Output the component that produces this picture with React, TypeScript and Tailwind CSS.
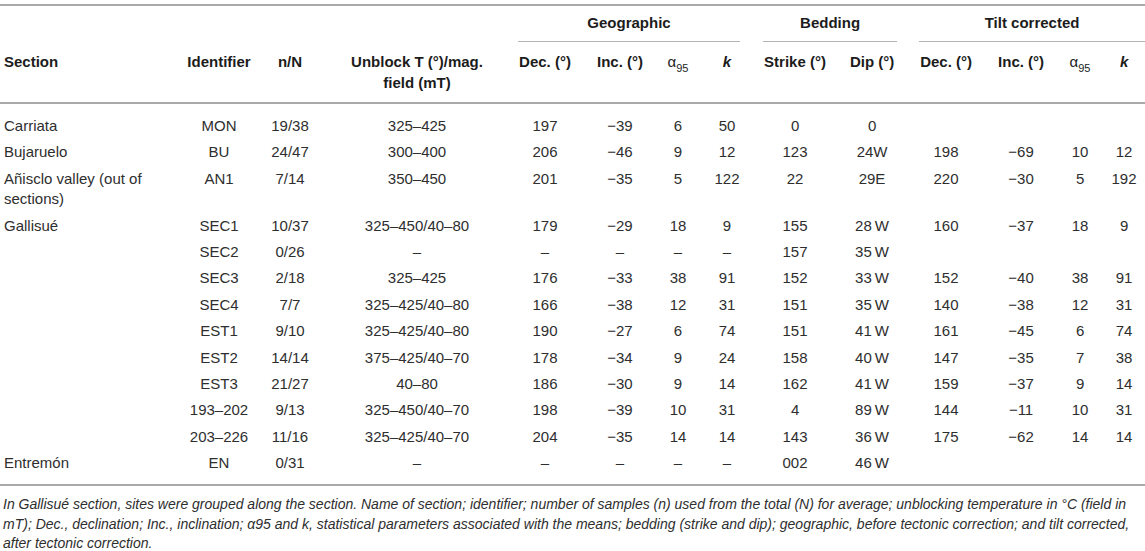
import React from 'react';

type Row = {
  section?: string;
  id: string;
  n: string;
  unblock: string;
  geo: string[];
  bed: string[];
  tilt?: string[];
};

const T = '\u2009';
const M = '\u2212';
const D = '\u2013';

const rows: Row[] = [
  { section: 'Carriata', id: 'MON', n: '19/38', unblock: `325${D}425`, geo: ['197', `${M}39`, '6', '50'], bed: ['0', '0'] },
  { section: 'Bujaruelo', id: 'BU', n: '24/47', unblock: `300${D}400`, geo: ['206', `${M}46`, '9', '12'], bed: ['123', '24W'], tilt: ['198', `${M}69`, '10', '12'] },
  { section: 'Añisclo valley (out of sections)', id: 'AN1', n: '7/14', unblock: `350${D}450`, geo: ['201', `${M}35`, '5', '122'], bed: ['22', '29E'], tilt: ['220', `${M}30`, '5', '192'] },
  { section: 'Gallisué', id: 'SEC1', n: '10/37', unblock: `325${D}450/40${D}80`, geo: ['179', `${M}29`, '18', '9'], bed: ['155', `28${T}W`], tilt: ['160', `${M}37`, '18', '9'] },
  { id: 'SEC2', n: '0/26', unblock: D, geo: [D, D, D, D], bed: ['157', `35${T}W`] },
  { id: 'SEC3', n: '2/18', unblock: `325${D}425`, geo: ['176', `${M}33`, '38', '91'], bed: ['152', `33${T}W`], tilt: ['152', `${M}40`, '38', '91'] },
  { id: 'SEC4', n: '7/7', unblock: `325${D}425/40${D}80`, geo: ['166', `${M}38`, '12', '31'], bed: ['151', `35${T}W`], tilt: ['140', `${M}38`, '12', '31'] },
  { id: 'EST1', n: '9/10', unblock: `325${D}425/40${D}80`, geo: ['190', `${M}27`, '6', '74'], bed: ['151', `41${T}W`], tilt: ['161', `${M}45`, '6', '74'] },
  { id: 'EST2', n: '14/14', unblock: `375${D}425/40${D}70`, geo: ['178', `${M}34`, '9', '24'], bed: ['158', `40${T}W`], tilt: ['147', `${M}35`, '7', '38'] },
  { id: 'EST3', n: '21/27', unblock: `40${D}80`, geo: ['186', `${M}30`, '9', '14'], bed: ['162', `41${T}W`], tilt: ['159', `${M}37`, '9', '14'] },
  { id: `193${D}202`, n: '9/13', unblock: `325${D}450/40${D}70`, geo: ['198', `${M}39`, '10', '31'], bed: ['4', `89${T}W`], tilt: ['144', `${M}11`, '10', '31'] },
  { id: `203${D}226`, n: '11/16', unblock: `325${D}425/40${D}70`, geo: ['204', `${M}35`, '14', '14'], bed: ['143', `36${T}W`], tilt: ['175', `${M}62`, '14', '14'] },
  { section: 'Entremón', id: 'EN', n: '0/31', unblock: D, geo: [D, D, D, D], bed: ['002', `46${T}W`] },
];

const widths = [180, 78, 64, 190, 66, 84, 32, 66, 70, 84, 64, 86, 32, 49];

const Alpha = () => (
  <span className="font-normal">
    α<sub className="text-[11px] align-[-3px]">95</sub>
  </span>
);

const App: React.FC = () => {
  const gh = 'pt-[7px] pb-0 border-t-2 border-[#a9a9a9] font-bold text-center align-top';
  const ch = 'pt-[8.5px] pb-[9.5px] border-b-2 border-[#a9a9a9] font-bold text-center align-top leading-[21px] whitespace-nowrap';
  const td = 'py-[3px] leading-[20.4px] text-center align-top whitespace-nowrap';

  return (
    <div className="w-[1145px] h-[551px] bg-white overflow-hidden font-['Liberation_Sans',Arial,sans-serif] text-[15px] text-[#2e2e2e]">
      <table className="mt-[4px] w-[1145px] table-fixed border-separate border-spacing-0">
        <colgroup>
          {widths.map((w, i) => (
            <col key={i} style={{ width: w }} />
          ))}
        </colgroup>
        <thead className="text-[#1c1c1c]">
          <tr>
            <th colSpan={4} className={gh}></th>
            <th colSpan={4} className={gh}>
              <div className="ml-[6px] mr-[20px] leading-[20px] pb-[8px] border-b border-[#b3b3b3]">Geographic</div>
            </th>
            <th colSpan={2} className={gh}>
              <div className="ml-[3px] mr-[17px] leading-[20px] pb-[8px] border-b border-[#b3b3b3]">Bedding</div>
            </th>
            <th colSpan={4} className={gh}>
              <div className="ml-[5px] leading-[20px] pb-[8px] border-b border-[#b3b3b3]">Tilt corrected</div>
            </th>
          </tr>
          <tr>
            <th className={`${ch} !text-left pl-[4px]`}>Section</th>
            <th className={ch}>Identifier</th>
            <th className={ch}>n/N</th>
            <th className={ch}>
              Unblock T (°)/mag.
              <br />
              field (mT)
            </th>
            <th className={ch}>Dec. (°)</th>
            <th className={ch}>Inc. (°)</th>
            <th className={ch}>
              <Alpha />
            </th>
            <th className={`${ch} italic`}>k</th>
            <th className={ch}>Strike (°)</th>
            <th className={ch}>Dip (°)</th>
            <th className={ch}>Dec. (°)</th>
            <th className={ch}>Inc. (°)</th>
            <th className={ch}>
              <Alpha />
            </th>
            <th className={`${ch} italic pl-[7px]`}>k</th>
          </tr>
        </thead>
        <tbody>
          <tr>
            <td colSpan={14} className="h-[9px] p-0"></td>
          </tr>
          {rows.map((r, i) => (
            <tr key={i}>
              <td className="py-[3px] pl-[4px] leading-[20.4px] text-left align-top">{r.section ?? ''}</td>
              <td className={td}>{r.id}</td>
              <td className={td}>{r.n}</td>
              <td className={td}>{r.unblock}</td>
              {r.geo.map((v, j) => (
                <td key={`g${j}`} className={td}>{v}</td>
              ))}
              {r.bed.map((v, j) => (
                <td key={`b${j}`} className={td}>{v}</td>
              ))}
              {(r.tilt ?? ['', '', '', '']).map((v, j) => (
                <td key={`t${j}`} className={j === 3 ? `${td} pl-[7px]` : td}>{v}</td>
              ))}
            </tr>
          ))}
          <tr>
            <td colSpan={14} className="h-[9.4px] p-0 border-b-2 border-[#a9a9a9]"></td>
          </tr>
        </tbody>
      </table>
      <p className="mt-[9px] pl-[3px] pr-[2px] text-[14px] leading-[19.5px] italic text-[#2e2e2e]">
        In Gallisué section, sites were grouped along the section. Name of section; identifier; number of samples (n) used from the total (N) for average; unblocking temperature in °C (field in mT); Dec., declination; Inc., inclination; α95 and k, statistical parameters associated with the means; bedding (strike and dip); geographic, before tectonic correction; and tilt corrected, after tectonic correction.
      </p>
    </div>
  );
};

export default App;
